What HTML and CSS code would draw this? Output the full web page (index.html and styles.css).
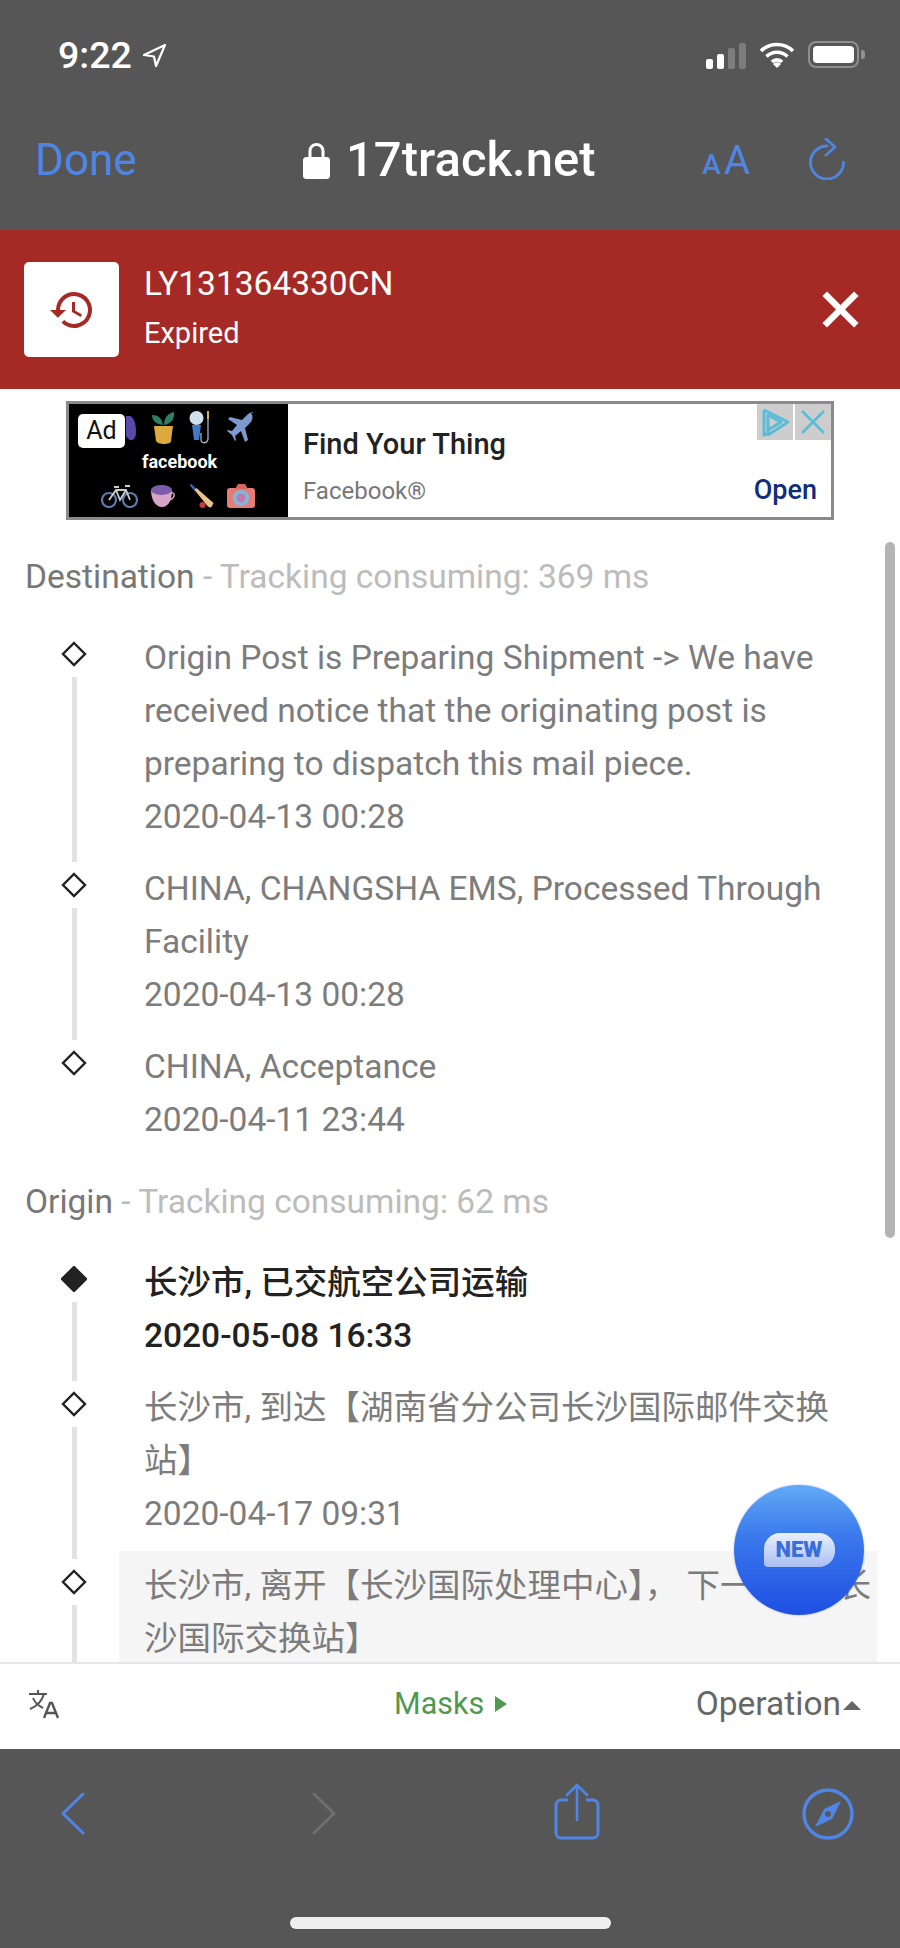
FILE: index.html
```html
<!DOCTYPE html>
<html>
<head>
<meta charset="UTF-8">
<title>17track.net</title>
<link rel="stylesheet" href="styles.css">
</head>
<body>
	<div id="phone">
		<header class="chrome-top">
			<div class="status">
				<div class="clock">
					<span>9:22</span>
					<svg class="arrow" viewBox="0 0 25 25"><path d="M23 2 2 12l10 1.500L14 23z" fill="none" stroke="#fff" stroke-width="2.200" stroke-linejoin="round"/></svg>
				</div>
				<div class="signals">
					<div class="bars"><i class="on b1"></i><i class="on b2"></i><i class="b3"></i><i class="b4"></i></div>
					<svg class="wifi" viewBox="0 0 36 26"><path d="M2 9a23 23 0 0 1 32 0M7.500 14.500a15 15 0 0 1 21 0M13 20a7 7 0 0 1 10 0" fill="none" stroke="#fff" stroke-width="3.600"/><path d="M18 26l-4-4a5.500 5.500 0 0 1 8 0z" fill="#fff"/></svg>
					<div class="battery"><div class="level"></div></div>
				</div>
			</div>
			<nav class="urlbar">
				<span class="done">Done</span>
				<div class="site">
					<svg class="lock" viewBox="0 0 27 37"><path d="M7 17V9a6.500 6.500 0 0 1 13 0v8" fill="none" stroke="#fff" stroke-width="3"/><rect y="15" width="27" height="22" rx="3.500" fill="#fff"/></svg>
					<span>17track.net</span>
				</div>
				<div class="tools">
					<span class="aa"><small>A</small>A</span>
					<svg class="reload" viewBox="0 0 38 42"><path d="M18 8A16.500 16.500 0 1 0 34.500 24.500" fill="none" stroke="#4f86e6" stroke-width="2.800" stroke-linecap="round"/><path d="M17 1l9 8-9 8" fill="none" stroke="#4f86e6" stroke-width="2.800" stroke-linecap="round" stroke-linejoin="round"/></svg>
				</div>
			</nav>
		</header>

		<section class="banner">
			<div class="banner-icon">
				<svg viewBox="0 0 24 24"><path d="M13 3a9 9 0 0 0-9 9H1l3.900 3.900L9 12H6a7 7 0 1 1 2.100 5l-1.400 1.400A9 9 0 1 0 13 3zm-1 5v5l4.300 2.500.7-1.200-3.500-2.100V8z" fill="#a52a25"/></svg>
			</div>
			<div class="banner-text">
				<div class="number">LY131364330CN</div>
				<div class="state">Expired</div>
			</div>
			<svg class="banner-close" viewBox="0 0 37 37"><path d="M5 5l27 27M32 5 5 32" stroke="#fff" stroke-width="6.500" stroke-linecap="square"/></svg>
		</section>

		<main class="content">
			<div class="ad">
				<div class="ad-thumb">
					<span class="ad-tag">Ad</span>
					<div class="thumb-row">
						<svg class="pic pad" viewBox="0 0 10 30"><path d="M0 3h3c5 0 7 8 7 16 0 6-3 9-6 8-2-1-4-3-4-5z" fill="#5b49a8"/></svg>
						<svg class="pic" viewBox="0 0 25 34"><path d="M12 14C4 13 1 9 1 4c6 0 10 3 11 10zM13 14c0-7 4-12 10-13 1 7-3 12-10 13z" fill="#2f7d62"/><path d="M3 15h19l-2 15c0 2-3 3-7 3s-7-1-8-3z" fill="#dcaa3c"/></svg>
						<svg class="pic" viewBox="0 0 25 34"><path d="M12 22v6c0 5 6 5 7 0V4" fill="none" stroke="#9fb4c8" stroke-width="1.300"/><circle cx="7.500" cy="7" r="7" fill="#cfe0ee"/><path d="M3 14h9l-2 15H5z" fill="#3e79c6"/><path d="M18 0h2v8h-2z" fill="#d0b060"/></svg>
						<svg class="pic" viewBox="0 0 28 34"><path d="M27 2c-2-2-5 0-7 2l-5 5L3 6 1 8l9 6-5 6-4-1-1 1 5 4 3 6 1-1-1-4 6-5 4 11 3-2-3-12 5-5c2-2 4-6 1-10z" fill="#7d9ad0"/></svg>
					</div>
					<div class="thumb-brand">facebook</div>
					<div class="thumb-row bottom">
						<svg class="pic" viewBox="0 0 37 24"><g fill="none" stroke="#5f78a8" stroke-width="2.200"><circle cx="8" cy="16" r="7"/><circle cx="29" cy="16" r="7"/></g><path d="M8 16l7-10h10l4 10M15 6l4 10 6-10M13 3h5M24 2h5" fill="none" stroke="#c8d0c8" stroke-width="1.800"/></svg>
						<svg class="pic" viewBox="0 0 25 24"><path d="M0 6h21c0 9-3 17-10 17S0 15 0 6z" fill="#d7a5c8"/><ellipse cx="10.500" cy="6" rx="10.500" ry="5" fill="#7a5ca8"/><path d="M20 9c4-1 5 4-1 7" fill="none" stroke="#d7a5c8" stroke-width="1.500"/></svg>
						<svg class="pic" viewBox="0 0 24 24"><path d="M0 1l2-1 5 5-2 2z" fill="#3d62b0"/><path d="M5 6l2-2 17 15-2 4c-1 1-3 0-4-1z" fill="#e8c48c"/><circle cx="13" cy="21" r="3" fill="#c83c3c"/></svg>
						<svg class="pic" viewBox="0 0 28 24"><rect y="4" width="28" height="20" rx="3" fill="#e67c78"/><path d="M8 5l3-5h7l3 5z" fill="#d96560"/><circle cx="14" cy="14" r="8" fill="#7fb8dc"/><circle cx="14" cy="14" r="4.500" fill="#c07cb0"/></svg>
					</div>
				</div>
				<div class="ad-info">
					<div class="ad-title">Find Your Thing</div>
					<div class="ad-foot">
						<span class="ad-brand">Facebook®</span>
						<span class="ad-open">Open</span>
					</div>
				</div>
				<div class="ad-choices">
					<span class="ad-btn"><svg viewBox="0 0 36 36"><path d="M7 6v25l4-1V11l13 7-13 8" fill="none" stroke="#5bbcd8" stroke-width="3" stroke-linejoin="round"/><path d="M7 6l24 12-20 13" fill="none" stroke="#5bbcd8" stroke-width="3" stroke-linejoin="round"/></svg></span>
					<span class="ad-btn"><svg viewBox="0 0 36 36"><path d="M7 7l22 22M29 7 7 29" stroke="#5bbcd8" stroke-width="2.600"/></svg></span>
				</div>
			</div>

			<h2 class="group-head">Destination <em>- Tracking consuming: 369 ms</em></h2>
			<ul class="timeline">
				<li class="event">
					<div class="mark"><svg class="dot" viewBox="0 0 26 26"><path d="M13 2 24 13 13 24 2 13z"/></svg><i class="rail"></i></div>
					<div class="event-body">Origin Post is Preparing Shipment -&gt; We have received notice that the originating post is preparing to dispatch this mail piece.<br>2020-04-13 00:28</div>
				</li>
				<li class="event">
					<div class="mark"><svg class="dot" viewBox="0 0 26 26"><path d="M13 2 24 13 13 24 2 13z"/></svg><i class="rail"></i></div>
					<div class="event-body">CHINA, CHANGSHA EMS, Processed Through Facility<br>2020-04-13 00:28</div>
				</li>
				<li class="event">
					<div class="mark"><svg class="dot" viewBox="0 0 26 26"><path d="M13 2 24 13 13 24 2 13z"/></svg></div>
					<div class="event-body">CHINA, Acceptance<br>2020-04-11 23:44</div>
				</li>
			</ul>

			<h2 class="group-head">Origin <em>- Tracking consuming: 62 ms</em></h2>
			<ul class="timeline">
				<li class="event current">
					<div class="mark"><svg class="dot" viewBox="0 0 26 26"><path d="M13 1 25 13 13 25 1 13z"/></svg><i class="rail"></i></div>
					<div class="event-body">长沙市, 已交航空公司运输<br>2020-05-08 16:33</div>
				</li>
				<li class="event">
					<div class="mark"><svg class="dot" viewBox="0 0 26 26"><path d="M13 2 24 13 13 24 2 13z"/></svg><i class="rail"></i></div>
					<div class="event-body">长沙市, 到达【湖南省分公司长沙国际邮件交换<br>站】<br>2020-04-17 09:31</div>
				</li>
				<li class="event selected">
					<div class="mark"><svg class="dot" viewBox="0 0 26 26"><path d="M13 2 24 13 13 24 2 13z"/></svg><i class="rail"></i></div>
					<div class="event-body">长沙市, 离开【长沙国际处理中心】， 下一站：&ensp;长<br>沙国际交换站】</div>
				</li>
			</ul>

			<div class="scrollbar"></div>
			<div class="fab"><span class="fab-new">NEW</span></div>
		</main>

		<footer class="actions">
			<svg class="translate" viewBox="0 0 31 30"><path d="M1 5h18M10 1v4M16 5c-2 7-7 12-14 15M5 9c2 5 6 8 10 10" fill="none" stroke="#555" stroke-width="2"/><path d="M16 29l6-15h2l6 15M18.500 24h9" fill="none" stroke="#555" stroke-width="2.400"/></svg>
			<div class="masks">Masks<i class="tri-right"></i></div>
			<div class="operation">Operation<i class="tri-up"></i></div>
		</footer>

		<footer class="chrome-bottom">
			<div class="toolbar">
				<svg class="chev" viewBox="0 0 25 43"><path d="M23 2 3 21.500 23 41" fill="none" stroke="#4f86e6" stroke-width="3" stroke-linecap="round" stroke-linejoin="round"/></svg>
				<svg class="chev" viewBox="0 0 25 43"><path d="M2 2l20 19.500L2 41" fill="none" stroke="#6f6f6f" stroke-width="3" stroke-linecap="round" stroke-linejoin="round"/></svg>
				<svg class="share" viewBox="0 0 46 57"><path d="M14 17H7a5 5 0 0 0-5 5v28a5 5 0 0 0 5 5h32a5 5 0 0 0 5-5V22a5 5 0 0 0-5-5h-7" fill="none" stroke="#4f86e6" stroke-width="3"/><path d="M23 37V2M13 12 23 2l10 10" fill="none" stroke="#4f86e6" stroke-width="2.600" stroke-linecap="round" stroke-linejoin="round"/></svg>
				<svg class="compass" viewBox="0 0 52 52"><circle cx="26" cy="26" r="24" fill="none" stroke="#4f86e6" stroke-width="3.400"/><path d="M39 13 30 31 13 39l9-18zM26 23a3 3 0 1 0 .01 0z" fill="#4f86e6" fill-rule="evenodd"/></svg>
			</div>
			<div class="home-bar"></div>
		</footer>
	</div>
</body>
</html>
```

FILE: styles.css
```css
* { box-sizing: border-box; }
html, body { margin: 0; padding: 0; }
body { background: #fff; font-family: Roboto, "Noto Sans CJK SC", sans-serif; color: #7c7c7c; }
svg { display: block; }
i { display: block; }
#phone { width: 900px; height: 1948px; display: flex; flex-direction: column; overflow: hidden; }

/* top chrome */
.chrome-top { height: 230px; background: #565656; color: #fff; flex: none; }
.status { height: 110px; padding: 41px 41px 0 58px; display: flex; justify-content: space-between; align-items: flex-start; }
.clock { display: flex; align-items: center; gap: 10px; font-size: 37.500px; font-weight: 500; line-height: 28px; }
.arrow { width: 25px; height: 25px; }
.signals { display: flex; align-items: flex-start; }
.bars { width: 40px; height: 26px; margin-top: 2px; display: flex; align-items: flex-end; gap: 4px; }
.bars i { width: 7px; background: #7d7d7d; border-radius: 2px; }
.bars .on { background: #fff; }
.b1 { height: 10px; }
.b2 { height: 15px; }
.b3 { height: 21px; }
.b4 { height: 26px; }
.wifi { width: 36px; height: 26px; margin: 1px 13px 0; }
.battery { position: relative; width: 51px; height: 27px; border: 2px solid #8f8f8f; border-radius: 8px; padding: 3px; }
.battery::after { content: ""; position: absolute; right: -8px; top: 7px; width: 4px; height: 9px; background: #8f8f8f; border-radius: 0 3px 3px 0; }
.level { width: 100%; height: 100%; background: #fff; border-radius: 4px; }

.urlbar { position: relative; height: 100px; padding: 0 53px 0 35px; display: flex; align-items: flex-start; justify-content: space-between; }
.done { font-size: 44px; line-height: 48px; color: #4f86e6; margin-top: 26px; }
.site { position: absolute; left: 303px; top: 22px; display: flex; align-items: center; gap: 16px; font-size: 49px; font-weight: 500; line-height: 56px; }
.lock { width: 27px; height: 37px; }
.tools { display: flex; align-items: flex-start; gap: 59px; margin-top: 28px; }
.aa { color: #4f86e6; font-size: 40px; line-height: 40px; margin-top: 3px; }
.aa small { font-size: 28px; font-weight: 500; margin-right: 3px; }
.reload { width: 38px; height: 42px; }

/* red banner */
.banner { height: 159px; flex: none; background: #a52a25; padding: 32px 41px 0 24px; display: flex; align-items: flex-start; color: #fff; }
.banner-icon { width: 95px; height: 95px; flex: none; background: #fff; border-radius: 5px; display: flex; align-items: center; justify-content: center; }
.banner-icon svg { width: 48px; height: 48px; }
.banner-text { flex: 1; margin-left: 25px; }
.number { font-size: 33.500px; line-height: 40px; margin-top: 2px; }
.state { font-size: 29px; line-height: 40px; margin-top: 9px; }
.banner-close { width: 37px; height: 37px; margin-top: 29px; }

/* scrolling content */
.content { position: relative; flex: 1; min-height: 0; overflow: hidden; padding-top: 12px; }

.ad { position: relative; height: 119px; margin: 0 66px 30px; border: 3px solid #8a8a8a; display: flex; }
.ad-thumb { position: relative; width: 219px; flex: none; background: #000; padding: 7px 0 0 32px; }
.ad-tag { position: absolute; left: 9px; top: 10px; width: 47px; height: 34px; background: #fff; border-radius: 5px; color: #111; font-size: 25px; line-height: 34px; text-align: center; }
.thumb-row { display: grid; grid-template-columns: 37px 25px 25px 28px; column-gap: 13px; height: 34px; }
.thumb-row .pic { width: 100%; height: 100%; }
.thumb-row .pad { width: 10px; justify-self: end; margin-right: 2px; }
.thumb-row.bottom { height: 24px; margin-top: 11px; }
.thumb-brand { color: #fff; font-size: 18px; font-weight: 700; line-height: 22px; margin-top: 6px; padding-left: 41px; }
.ad-info { flex: 1; padding: 0 14px 0 15px; color: #777; }
.ad-title { color: #222; font-size: 29px; font-weight: 500; line-height: 32px; margin-top: 24px; }
.ad-foot { display: flex; justify-content: space-between; align-items: baseline; margin-top: 14px; line-height: 32px; }
.ad-brand { font-size: 24px; }
.ad-open { color: #0e2d7d; font-size: 27px; font-weight: 500; }
.ad-choices { position: absolute; top: 0; right: 0; display: flex; gap: 2px; }
.ad-btn { width: 36px; height: 36px; background: #cdcdcd; }

.group-head { margin: 18px 0 20px; padding-left: 25px; font-size: 33.500px; font-weight: 400; line-height: 53px; color: #777; }
.group-head em { font-style: normal; color: #bcbcbc; }

.timeline { list-style: none; margin: 0; padding: 0; }
.event { display: flex; }
.mark { width: 119px; flex: none; padding: 18px 26px 0 55px; display: flex; flex-direction: column; align-items: center; }
.dot { width: 26px; height: 26px; flex: none; fill: none; stroke: #222; stroke-width: 2.400; }
.rail { flex: 1; width: 5px; margin: 10px 0 -8px; background: #e2e2e2; }
.event-body { width: 758px; padding: 8px 8px 11px 25px; font-size: 33.500px; line-height: 53px; }
.current .event-body { color: #222; font-weight: 500; }
.current .dot { fill: #222; }
.selected .event-body { background: #f5f5f5; padding-right: 0; white-space: nowrap; }

.scrollbar { position: absolute; right: 5px; top: 153px; width: 10px; height: 696px; border-radius: 5px; background: #b4b4b4; }

.fab { position: absolute; left: 734px; top: 1096px; width: 130px; height: 130px; border-radius: 50%; background: linear-gradient(#62aaf5, #3a78ec 40%, #1f4fe2); display: flex; align-items: center; justify-content: center; box-shadow: 0 0 2px rgba(31,80,226,.5); }
.fab-new { width: 71px; height: 34px; border-radius: 16px 16px 16px 4px; background: linear-gradient(#e9f1fe, #a9bff2); color: #3a6ddd; font-size: 22px; font-weight: 900; line-height: 34px; text-align: center; }

/* bottom actions */
.actions { position: relative; height: 87px; flex: none; background: #fff; border-top: 2px solid #e6e6e6; display: flex; align-items: flex-start; }
.translate { width: 31px; height: 30px; margin: 25px 0 0 28px; }
.masks { position: absolute; left: 394px; top: 18px; display: flex; align-items: center; gap: 11px; color: #4f9a4f; font-size: 30.500px; line-height: 44px; }
.tri-right { width: 0; height: 0; border-left: 12px solid #4f9a4f; border-top: 8px solid transparent; border-bottom: 8px solid transparent; }
.operation { margin: 18px 0 0 auto; padding-right: 59px; position: relative; color: #666; font-size: 33.500px; line-height: 44px; }
.tri-up { position: absolute; right: 39px; top: 19px; width: 0; height: 0; border-bottom: 9px solid #666; border-left: 9px solid transparent; border-right: 9px solid transparent; }

/* bottom chrome */
.chrome-bottom { height: 199px; flex: none; background: #565656; position: relative; }
.toolbar { height: 110px; padding-top: 34px; position: relative; }
.chev { position: absolute; top: 43px; width: 25px; height: 43px; }
.chev:nth-child(1) { left: 60px; }
.chev:nth-child(2) { left: 312px; }
.share { position: absolute; left: 554px; top: 34px; width: 46px; height: 57px; }
.compass { position: absolute; left: 802px; top: 39px; width: 52px; height: 52px; }
.home-bar { position: absolute; left: 290px; top: 168px; width: 321px; height: 12px; border-radius: 6px; background: #eee; }
```
